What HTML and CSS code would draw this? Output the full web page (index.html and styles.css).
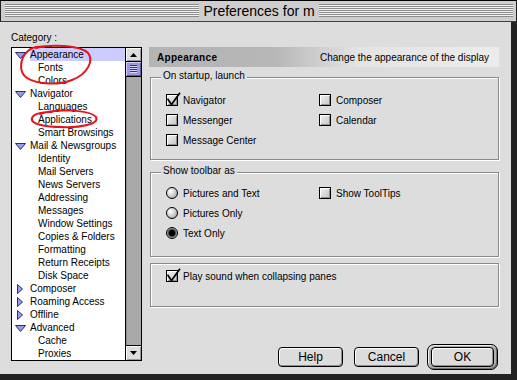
FILE: index.html
```html
<!DOCTYPE html>
<html lang="en">
<head>
<meta charset="utf-8">
<title>Preferences for m</title>
<link rel="stylesheet" href="styles.css">
</head>
<body>
<div class="window">
  <div class="titlebar">
    <div class="stripes"></div>
    <div class="title">Preferences for m</div>
    <div class="stripes"></div>
  </div>
  <div class="main">
    <div class="leftcol">
      <div class="cat-label">Category :</div>
      <div class="listbox">
        <div class="rows">
          <div class="row"><span class="tw"><svg class="tri-down" width="11" height="7" viewBox="0 0 11 7"><path d="M0.5 0.5H10.5L5.5 6.5Z"/></svg></span><span class="label sel">Appearance</span></div>
          <div class="row child">Fonts</div>
          <div class="row child">Colors</div>
          <div class="row"><span class="tw"><svg class="tri-down" width="11" height="7" viewBox="0 0 11 7"><path d="M0.5 0.5H10.5L5.5 6.5Z"/></svg></span><span class="label">Navigator</span></div>
          <div class="row child">Languages</div>
          <div class="row child">Applications</div>
          <div class="row child">Smart Browsings</div>
          <div class="row"><span class="tw"><svg class="tri-down" width="11" height="7" viewBox="0 0 11 7"><path d="M0.5 0.5H10.5L5.5 6.5Z"/></svg></span><span class="label">Mail &amp; Newsgroups</span></div>
          <div class="row child">Identity</div>
          <div class="row child">Mail Servers</div>
          <div class="row child">News Servers</div>
          <div class="row child">Addressing</div>
          <div class="row child">Messages</div>
          <div class="row child">Window Settings</div>
          <div class="row child">Copies &amp; Folders</div>
          <div class="row child">Formatting</div>
          <div class="row child">Return Receipts</div>
          <div class="row child">Disk Space</div>
          <div class="row"><span class="tw"><svg class="tri-right" width="6" height="10" viewBox="0 0 6 10"><path d="M0.5 0.5L5.5 5L0.5 9.5Z"/></svg></span><span class="label">Composer</span></div>
          <div class="row"><span class="tw"><svg class="tri-right" width="6" height="10" viewBox="0 0 6 10"><path d="M0.5 0.5L5.5 5L0.5 9.5Z"/></svg></span><span class="label">Roaming Access</span></div>
          <div class="row"><span class="tw"><svg class="tri-right" width="6" height="10" viewBox="0 0 6 10"><path d="M0.5 0.5L5.5 5L0.5 9.5Z"/></svg></span><span class="label">Offline</span></div>
          <div class="row"><span class="tw"><svg class="tri-down" width="11" height="7" viewBox="0 0 11 7"><path d="M0.5 0.5H10.5L5.5 6.5Z"/></svg></span><span class="label">Advanced</span></div>
          <div class="row child">Cache</div>
          <div class="row child">Proxies</div>
        </div>
        <div class="scrollbar">
          <div class="arrow up"><svg width="7" height="4" viewBox="0 0 7 4"><path d="M3.5 0L7 4H0Z"/></svg></div>
          <div class="thumb"><div class="grip"></div></div>
          <div class="track"></div>
          <div class="arrow down"><svg width="7" height="4" viewBox="0 0 7 4"><path d="M0 0H7L3.5 4Z"/></svg></div>
        </div>
      </div>
    </div>
    <div class="rightcol">
      <div class="header"><span class="h-title">Appearance</span><span class="h-desc">Change the appearance of the display</span></div>

      <div class="group g1">
        <div class="legend">On startup, launch</div>
        <div class="opts">
          <div class="opt"><span class="cb"><svg class="check" width="15" height="14" viewBox="0 0 15 14"><path d="M2 5.5L5.5 10.5L13.5 -0.5"/></svg></span>Navigator</div>
          <div class="opt"><span class="cb"></span>Composer</div>
          <div class="opt"><span class="cb"></span>Messenger</div>
          <div class="opt"><span class="cb"></span>Calendar</div>
          <div class="opt"><span class="cb"></span>Message Center</div>
        </div>
      </div>

      <div class="group g2">
        <div class="legend">Show toolbar as</div>
        <div class="opts">
          <div class="opt"><span class="rb"></span>Pictures and Text</div>
          <div class="opt"><span class="cb"></span>Show ToolTips</div>
          <div class="opt"><span class="rb"></span>Pictures Only</div>
          <div class="opt empty"></div>
          <div class="opt"><span class="rb on"></span>Text Only</div>
        </div>
      </div>

      <div class="group g3">
        <div class="opts">
          <div class="opt wide"><span class="cb"><svg class="check" width="15" height="14" viewBox="0 0 15 14"><path d="M2 5.5L5.5 10.5L13.5 -0.5"/></svg></span>Play sound when collapsing panes</div>
        </div>
      </div>

      <div class="buttons">
        <div class="btn help">Help</div>
        <div class="btn cancel">Cancel</div>
        <div class="ring"><div class="btn ok">OK</div></div>
      </div>
    </div>
  </div>
  <svg class="annot" width="517" height="380" viewBox="0 0 517 380">
    <path d="M36 48C50 44 80 45 88 53C94 60 88 74 72 80C60 85 38 85 27 78C18 72 20 58 28 51C31 48 36 46 44 47"/>
    <path d="M40 114C55 108 90 110 96 117C100 124 80 128 62 127C45 127 30 124 32 118C34 113 45 112 52 112"/>
  </svg>
</div>
</body>
</html>
```

FILE: styles.css
```css
* { box-sizing: border-box; margin: 0; padding: 0; }
html, body { width: 517px; height: 380px; overflow: hidden; }
body {
  font-family: "Liberation Sans", Arial, sans-serif;
  font-size: 10px;
  color: #000;
  background: #ddd;
}
.window {
  position: relative;
  width: 517px;
  height: 380px;
  display: flex;
  flex-direction: column;
  background: #ddd;
}

/* title bar */
.titlebar {
  height: 22px;
  flex: none;
  display: flex;
  align-items: center;
  background: #cecece;
  border-top: 1px solid #000;
  border-bottom: 1px solid #404040;
  border-left: 1px solid #222;
  border-right: 1px solid #222;
  padding: 0 3px 1px 4px;
}
.stripes {
  flex: 1;
  height: 13px;
  background: repeating-linear-gradient(to bottom, #8c8c8c 0 1px, #f2f2f2 1px 2px);
}
.title {
  font-size: 14px;
  line-height: 16px;
  margin: 0 4px;
  white-space: nowrap;
}

/* main area */
.main {
  flex: 1;
  display: flex;
  gap: 7px;
  padding: 9px 12px 0 11px;
  border-right: 6px solid #222;
  border-bottom: 6px solid #222;
}
.leftcol { width: 131px; flex: none; }
.cat-label { height: 13px; line-height: 13px; margin-bottom: 3px; }
.listbox {
  height: 314px;
  border: 1px solid #000;
  background: #fff;
  display: flex;
}
.rows { flex: 1; overflow: hidden; }
.row {
  height: 13px;
  line-height: 13px;
  display: flex;
  align-items: center;
  white-space: nowrap;
}
.row.child { padding-left: 26px; }
.tw {
  width: 18px;
  height: 13px;
  flex: none;
  display: flex;
  align-items: center;
}
.tri-down { margin: 2px 0 0 3px; }
.tri-right { margin: 1px 0 0 5px; }
.tw path { fill: #9a9af2; stroke: #2e2e66; stroke-width: 1; }
.label { flex: 1; height: 13px; }
.label.sel { background: #ccccff; }

/* scrollbar */
.scrollbar {
  width: 16px;
  flex: none;
  border-left: 1px solid #000;
  display: flex;
  flex-direction: column;
}
.arrow {
  flex: none;
  background: #ddd;
  display: flex;
  align-items: center;
  justify-content: center;
  box-shadow: inset 1px 1px #fff, inset -1px -1px #999;
}
.arrow.up { height: 14px; border-bottom: 1px solid #000; }
.arrow.down { height: 15px; border-top: 1px solid #000; }
.arrow path { fill: #000; }
.thumb {
  height: 15px;
  flex: none;
  background: #9a9ade;
  border-bottom: 1px solid #000;
  box-shadow: inset 1px 1px #ccccff, inset -1px -1px #5c5c99;
  display: flex;
  align-items: center;
  justify-content: center;
}
.grip {
  width: 7px;
  height: 8px;
  background: repeating-linear-gradient(to bottom, #34346a 0 1px, #d6d6ff 1px 2px);
}
.track {
  flex: 1;
  background: #a9a9a9;
  box-shadow: inset 1px 0 #8a8a8a;
}

/* right column */
.rightcol {
  width: 350px;
  flex: none;
  padding-top: 16px;
  display: flex;
  flex-direction: column;
}
.header {
  height: 20px;
  flex: none;
  display: flex;
  align-items: center;
  padding: 0 10px 0 8px;
  background: linear-gradient(to right, #b4b4b4 0%, #b7b7b7 36%, #e4e4e4 60%, #ececec 100%);
  white-space: nowrap;
}
.h-title { font-weight: bold; letter-spacing: 0.3px; }
.h-desc { margin-left: auto; }

.group {
  margin-left: 1px;
  border: 1px solid #8a8a8a;
  box-shadow: inset 1px 1px #fff, 1px 1px #fff;
  flex: none;
}
.legend {
  width: max-content;
  height: 12px;
  line-height: 12px;
  padding: 0 2px;
  margin: -8px 0 0 -5px;
  background: #ddd;
}
.opts {
  display: grid;
  grid-template-columns: 153px auto;
  grid-auto-rows: 20px;
}
.g1 { margin-top: 10px; padding: 0 0 9px 15px; }
.g1 .opts { margin-top: 8px; }
.g2 { margin-top: 12px; padding: 0 0 13px 15px; }
.g2 .opts { margin-top: 6px; }
.g3 { margin-top: 6px; padding: 2px 0 20px 15px; }
.opt.wide { grid-column: 1 / -1; }

.opt {
  display: flex;
  align-items: center;
  gap: 5px;
  white-space: nowrap;
}
.cb {
  position: relative;
  width: 12px;
  height: 12px;
  flex: none;
  border: 1px solid #000;
  background: linear-gradient(135deg, #f2f2f2 0%, #d6d6d6 60%, #c4c4c4 100%);
  box-shadow: inset 1px 1px #fff, inset -1px -1px #8f8f8f;
}
.check {
  position: absolute;
  left: -1px;
  top: -1px;
  overflow: visible;
}
.check path { fill: none; stroke: #000; stroke-width: 1.7; stroke-linecap: square; }
.rb {
  width: 12px;
  height: 12px;
  flex: none;
  border-radius: 50%;
  border: 1px solid #000;
  background: radial-gradient(circle at 35% 35%, #ffffff 0, #e8e8e8 25%, #a6a6a6 85%);
}
.rb.on {
  background: radial-gradient(circle at 50% 50%, #000 0 2.8px, #3a3a3a 3.3px, #8a8a8a 4.5px, #c0c0c0 5px);
}

/* buttons */
.buttons {
  margin-top: 37px;
  display: flex;
  align-items: center;
  justify-content: flex-end;
  padding-right: 1px;
}
.btn {
  height: 20px;
  width: 65px;
  border: 1px solid #000;
  border-radius: 4px;
  background: #dcdcdc;
  box-shadow: inset 1px 1px #fff, inset -1px -1px #8f8f8f;
  display: flex;
  align-items: center;
  justify-content: center;
  font-size: 12px;
}
.help { margin-right: 11px; }
.cancel { margin-right: 8px; }
.ring {
  border: 1px solid #000;
  border-radius: 7px;
  padding: 2px 3px;
  background: #b0b0b0;
  box-shadow: inset 1px 1px #eee, inset -1px -1px #6f6f6f;
}
.btn.ok { width: 63px; }

/* hand drawn annotations */
.annot {
  position: absolute;
  left: 0;
  top: 0;
  pointer-events: none;
}
.annot path { fill: none; stroke: #e3141b; stroke-width: 2; stroke-linecap: round; }
```
